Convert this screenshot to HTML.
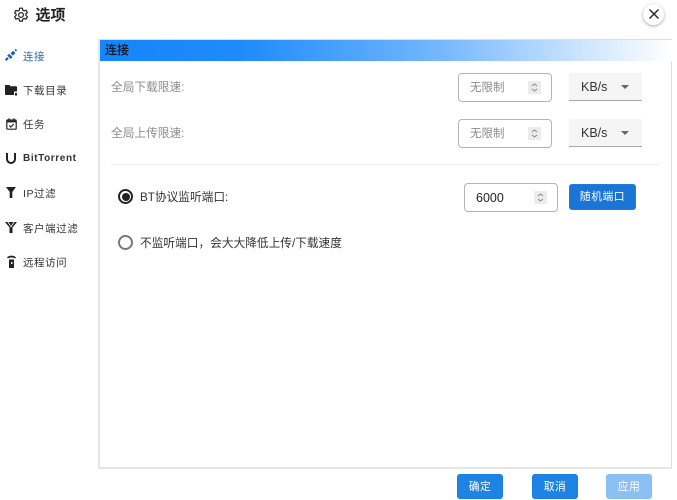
<!DOCTYPE html>
<html lang="zh">
<head>
<meta charset="utf-8">
<style>
html,body{margin:0;padding:0;background:#fff}
body{width:677px;height:500px;position:relative;overflow:hidden;font-family:"Liberation Sans","Noto Sans CJK SC",sans-serif;color:#222}
.a{position:absolute;white-space:nowrap}
.nav{left:23px;font-size:10.5px;line-height:14px;letter-spacing:.55px;color:#333}
.lab{left:111px;font-size:11.7px;line-height:16px;color:#8c8c8c}
.inp{box-sizing:border-box;background:#fff;border:1px solid #b4b4b4;border-radius:4px}
.spin{position:absolute;width:13px;height:13px;background:#ececec}
.sel{left:569px;width:73px;height:28px;background:#f5f5f5;border-bottom:1px solid #a8a8a8;box-sizing:border-box;font-size:12.5px;line-height:28px;padding-left:12px;color:#333}
.sel i{position:absolute;left:52px;top:12px;width:0;height:0;border-left:4px solid transparent;border-right:4px solid transparent;border-top:4px solid #666}
.btn{box-sizing:border-box;background:#1e84e4;border:1px solid #1a7fe0;border-radius:3px;color:#fff;text-align:center;font-size:10.8px;letter-spacing:.5px}
svg{position:absolute;overflow:visible}
</style>
</head>
<body>
<svg style="left:13px;top:7px" width="16" height="16" viewBox="0 0 16 16" fill="none" stroke="#222" stroke-width="1.2"><path d="M6.6 1.2h2.8l.4 2 1.3.7 1.9-.7 1.4 2.4-1.5 1.3v1.500l1.500 1.300-1.400 2.400-1.900-.7-1.300.7-.4 2H6.600l-.4-2-1.300-.7-1.900.7-1.400-2.400 1.500-1.300V7.100L1.600 5.800 3 3.400l1.900.7 1.300-.7z"/><circle cx="8" cy="8" r="2.400"/></svg>
<div class="a" style="left:35.5px;top:6px;font-size:15px;line-height:19px;font-weight:700;color:#222">选项</div>
<div class="a" style="left:643px;top:4px;width:21px;height:21px;border-radius:50%;background:#fff;box-shadow:0 1px 3px rgba(0,0,0,.35)"></div>
<svg style="left:649px;top:9px" width="10" height="10" viewBox="0 0 10 10" stroke="#222" stroke-width="1.4"><path d="M.5.5l9 9M9.500.5l-9 9"/></svg>

<svg style="left:5px;top:49px" width="12" height="12" viewBox="0 0 12 12" fill="#1a5fb0"><path d="M0 10.500l2-2.500 1.800 1.800L1.200 12z"/><path d="M2.200 6.500l2-1.700 3.200 3.200-1.700 2z"/><path d="M5.500 4.200L8.200 1.800l2.200 2.200L7.900 6.700z"/><path d="M9.500.3L11 0l1 1.200-1.300 1.500z"/></svg>
<div class="a nav" style="top:50px;color:#2a69ad">连接</div>
<svg style="left:5px;top:85px" width="12" height="11" viewBox="0 0 12 11" fill="#222"><path d="M0 0h4.500l1 1.300H11c.5 0 1 .4 1 1V6.500H9V10H1c-.6 0-1-.4-1-1z"/><rect x="10" y="8" width="2" height="2.500"/></svg>
<div class="a nav" style="top:84px">下载目录</div>
<svg style="left:6px;top:118px" width="11" height="12" viewBox="0 0 11 12" fill="none" stroke="#222" stroke-width="1.200"><rect x=".8" y="2" width="9.400" height="9.200" rx=".8"/><path d="M.8 3.500h9.400" stroke-width="1.800"/><path d="M3 .3v2M8 .3v2"/><path d="M3.300 7.500l1.500 1.500 3-3"/></svg>
<div class="a nav" style="top:118px">任务</div>
<svg style="left:6px;top:153px" width="10" height="11" viewBox="0 0 10 11" fill="none" stroke="#222"><path d="M1 0v6a4 4 0 0 0 8 0V0" stroke-width="2"/></svg>
<div class="a nav" style="top:152px;font-weight:700;font-size:10px;letter-spacing:.6px">BitTorrent</div>
<svg style="left:6px;top:187px" width="10" height="11" viewBox="0 0 10 11" fill="#222"><path d="M0 0h10L6.300 5v6H3.700V5z"/></svg>
<div class="a nav" style="top:187px">IP过滤</div>
<svg style="left:5px;top:222px" width="12" height="11" viewBox="0 0 12 11" fill="#222"><path d="M0 0h2.500L6 5.500 9.500 0H12L7.500 5.500V11h-3V5.500z"/><path d="M3.500 0h5L6 4z"/></svg>
<div class="a nav" style="top:222px">客户端过滤</div>
<svg style="left:7px;top:255px" width="9" height="13" viewBox="0 0 9 13" fill="#222"><path d="M0 2.500C2 0 7 0 9 2.500L8 3.500C6.500 2.200 2.500 2.200 1 3.500z"/><path d="M2 4.500h5V13H2z"/><rect x="4" y="7" width="1.500" height="2" fill="#fff"/></svg>
<div class="a nav" style="top:256px">远程访问</div>

<div class="a" style="left:98px;top:39px;width:574px;height:430px;box-sizing:border-box;border:1px solid #dedede;border-left:2px solid #e6e6e6;border-bottom:2px solid #e6e6e6"></div>
<div class="a" style="left:100px;top:40px;width:572px;height:21px;background:linear-gradient(90deg,#1585fb 0%,#1f8bfb 25%,#76b8fd 60%,#cfe6fe 85%,#fff 100%)"></div>
<div class="a" style="left:105px;top:42px;font-size:12px;line-height:17px;color:#111;-webkit-text-stroke:.2px #111">连接</div>

<div class="a lab" style="top:80px">全局下载限速:</div>
<div class="a lab" style="top:126px">全局上传限速:</div>
<div class="a inp" style="left:458px;top:73px;width:94px;height:29px"><div class="a" style="left:11px;top:6px;font-size:11.500px;line-height:17px;color:#8a8a8a">无限制</div><div class="spin" style="left:69px;top:7px"><svg style="left:3px;top:2px" width="7" height="9" viewBox="0 0 7 9" fill="none" stroke="#888"><path d="M1 3l2.500-2L6 3M1 6l2.500 2L6 6"/></svg></div></div>
<div class="a inp" style="left:458px;top:119px;width:94px;height:29px"><div class="a" style="left:11px;top:6px;font-size:11.500px;line-height:17px;color:#8a8a8a">无限制</div><div class="spin" style="left:69px;top:7px"><svg style="left:3px;top:2px" width="7" height="9" viewBox="0 0 7 9" fill="none" stroke="#888"><path d="M1 3l2.500-2L6 3M1 6l2.500 2L6 6"/></svg></div></div>
<div class="a sel" style="top:73px">KB/s<i></i></div>
<div class="a sel" style="top:119px">KB/s<i></i></div>
<div class="a" style="left:111px;top:164px;width:549px;height:1px;background:#eeeeee"></div>

<div class="a" style="left:118px;top:189px;width:15px;height:15px;box-sizing:border-box;border:2px solid #222;border-radius:50%"></div>
<div class="a" style="left:121.500px;top:192.500px;width:8px;height:8px;border-radius:50%;background:#222"></div>
<div class="a" style="left:140px;top:190px;font-size:11.700px;line-height:16px;color:#333">BT协议监听端口:</div>
<div class="a" style="left:118px;top:235px;width:15px;height:15px;box-sizing:border-box;border:2px solid #777;border-radius:50%"></div>
<div class="a" style="left:140px;top:236px;font-size:11.700px;line-height:16px;color:#333">不监听端口，会大大降低上传/下载速度</div>

<div class="a inp" style="left:464px;top:183px;width:94px;height:29px"><div class="a" style="left:11px;top:6px;font-size:12.500px;line-height:16px;color:#222">6000</div><div class="spin" style="left:69px;top:7px"><svg style="left:3px;top:2px" width="7" height="9" viewBox="0 0 7 9" fill="none" stroke="#888"><path d="M1 3l2.500-2L6 3M1 6l2.500 2L6 6"/></svg></div></div>
<div class="a btn" style="left:569px;top:184px;width:67px;height:26px;line-height:24px;background:#1a75d6">随机端口</div>

<div class="a btn" style="left:457px;top:474px;width:46px;height:25px;line-height:25px">确定</div>
<div class="a btn" style="left:532px;top:474px;width:46px;height:25px;line-height:25px">取消</div>
<div class="a btn" style="left:606px;top:474px;width:46px;height:25px;line-height:25px;background:#8bc0f2;border-color:#86bcf0">应用</div>
</body>
</html>
